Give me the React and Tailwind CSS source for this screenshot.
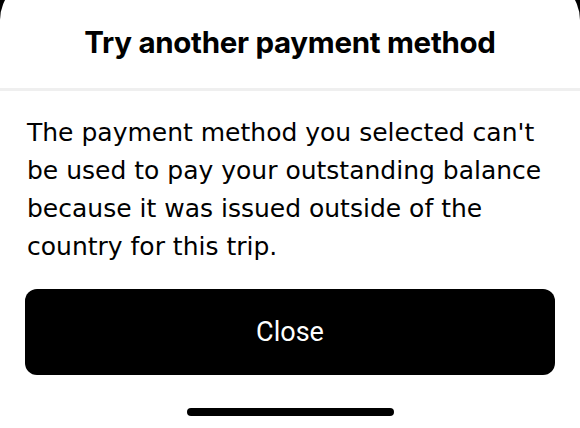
export default function App() {
  return (
    <div className="h-[428px] w-[580px] overflow-hidden bg-black">
      <div className="-mt-[22px] flex h-[450px] flex-col rounded-t-[42px] bg-white pt-[22px]">
        <div className="flex h-[88px] items-center justify-center pb-[4px]">
          <h1 className="font-['Inter',sans-serif] text-[29.5px] font-bold tracking-[-0.01em] text-black">
            Try another payment method
          </h1>
        </div>
        <div className="h-[3px] bg-[#efefef]" />
        <p className="pl-[27px] pr-[22px] pt-[23px] font-['DejaVu_Sans',sans-serif] text-[25px] leading-[38px] text-black">
          The payment method you selected can't be used to pay your outstanding balance because it was issued outside of the country for this trip.
        </p>
        <div className="px-[25px] pt-[23px]">
          <button className="flex h-[86px] w-full items-center justify-center rounded-[12px] bg-black font-['Roboto',sans-serif] text-[27px] font-normal text-white">
            Close
          </button>
        </div>
        <div className="flex justify-center pt-[33px]">
          <div className="h-[8px] w-[207px] rounded-full bg-black" />
        </div>
      </div>
    </div>
  )
}
